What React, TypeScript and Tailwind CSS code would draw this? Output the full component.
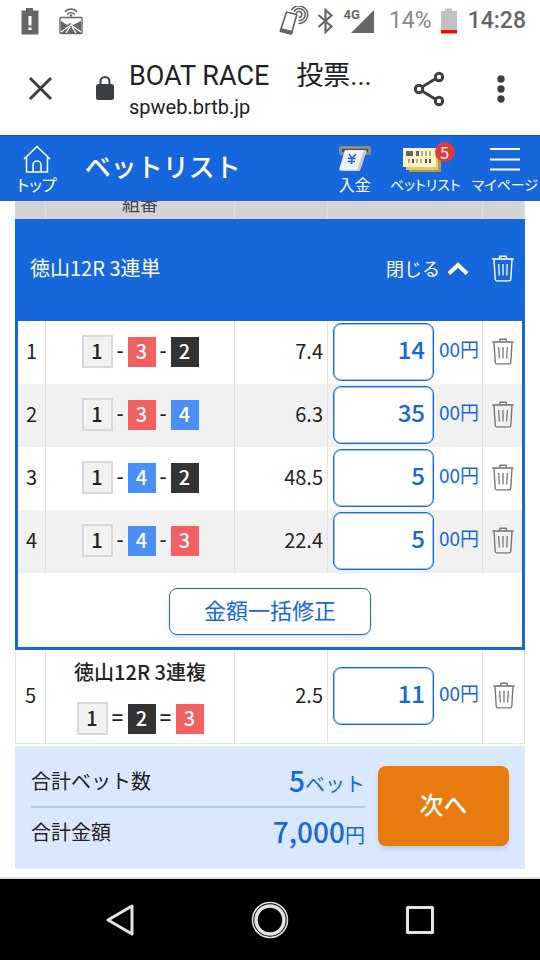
import React from "react";

type Boat = 1 | 2 | 3 | 4;

interface Bet {
  no: number;
  boats: Boat[];
  odds: string;
  amount: string;
  title?: string;
}

const groupBets: Bet[] = [
  { no: 1, boats: [1, 3, 2], odds: "7.4", amount: "14" },
  { no: 2, boats: [1, 3, 4], odds: "6.3", amount: "35" },
  { no: 3, boats: [1, 4, 2], odds: "48.5", amount: "5" },
  { no: 4, boats: [1, 4, 3], odds: "22.4", amount: "5" },
];

const singleBet: Bet = { no: 5, boats: [1, 2, 3], odds: "2.5", amount: "11", title: "徳山12R 3連複" };

const boatStyle: Record<Boat, string> = {
  1: "h-[33px] w-[31px] border-2 border-[#d8d8d8] bg-[#f1f1f1] text-[#222]",
  2: "h-[30px] w-7 bg-[#333] text-white",
  3: "h-[30px] w-7 bg-[#f16062] text-white",
  4: "h-[30px] w-7 bg-[#4a8ff5] text-white",
};

function TrashIcon({ className }: { className: string }) {
  return (
    <svg className={className} width="22" height="27" viewBox="0 0 22 27" fill="none" stroke="currentColor" aria-hidden="true">
      <path d="M0.3 4H21.7" strokeWidth="1.6" />
      <path d="M7.5 3.6L8 1.2H14L14.5 3.6" strokeWidth="1.5" />
      <path d="M2 4.4L3.2 24.2C3.3 25.3 3.9 25.9 5 25.9H17C18.1 25.9 18.7 25.3 18.8 24.2L20 4.4" strokeWidth="1.4" />
      <path d="M6.7 9L7.3 20.5M11 9V20.5M15.3 9L14.7 20.5" strokeWidth="1.3" />
    </svg>
  );
}

function StatusBar() {
  return (
    <div className="flex h-[42px] items-center justify-between pr-3.5 pl-[21px] text-[#666]">
      <div className="flex items-center gap-5">
        <svg width="18" height="28" viewBox="0 0 18 28" aria-hidden="true">
          <path d="M5 1H12V3.500H17.500V27.500H0.500V3.500H5Z" fill="currentColor" />
          <path d="M7.500 9H10.500V18.500H7.500ZM7.500 20.500H10.500V23H7.500Z" fill="white" />
        </svg>
        <svg width="24" height="28" viewBox="0 0 24 28" fill="none" stroke="currentColor" aria-hidden="true">
          <path d="M6 5C9 1 15 1 18 5M8 7.500C10 5 14 5 16 7.500" strokeWidth="1.300" />
          <circle cx="12" cy="8.500" r="1.200" fill="currentColor" stroke="none" />
          <rect x="1" y="10.500" width="22" height="16" rx="1" strokeWidth="1.400" />
          <path d="M2 14L8 18L11 16L14 18L22 14V26H2Z" fill="currentColor" stroke="none" />
          <path d="M12 17V18.500M12 18L2 25M12 18L22 25M11 20L7 26M13 20L17 26" stroke="white" strokeWidth="1.300" />
        </svg>
      </div>
      <div className="flex items-center">
        <svg width="31" height="30" viewBox="0 0 31 30" fill="none" stroke="currentColor" aria-hidden="true">
          <path d="M8.500 6L18.800 8.500L13.500 27.500L2.500 24.500Z" strokeWidth="1.700" strokeLinejoin="round" />
          <path d="M3 22.500L14.500 25.500L13.500 28.500L2 25.500Z" fill="currentColor" />
          <path d="M13.500 4A8.800 8.800 0 1 1 20.500 17.500M16 5.500A6 6 0 1 1 20.500 14.500M18 7.500A3 3 0 1 1 20.500 11.500" strokeWidth="1.600" />
        </svg>
        <svg className="ml-2" width="17" height="26" viewBox="0 0 17 26" fill="none" stroke="currentColor" aria-hidden="true">
          <path d="M1.500 7L14.500 18.500L8.500 24V2L14.500 7.500L1.500 19" strokeWidth="2.200" />
        </svg>
        <span className="ml-2.5 flex">
          <span className="text-[13px] leading-[14px] font-bold">4G</span>
          <svg className="-ml-2.5" width="24" height="26" viewBox="0 0 24 26" aria-hidden="true">
            <path d="M24 2V25H1Z" fill="currentColor" />
          </svg>
        </span>
        <span className="ml-[15px] text-[23px] text-[#888]">14%</span>
        <svg className="ml-2" width="18" height="26" viewBox="0 0 18 26" aria-hidden="true">
          <path d="M5 0.500H12V3H17V23H1V3H5Z" fill="#c1c1c1" />
          <path d="M1 22H17V25.500H1Z" fill="#f60606" />
        </svg>
        <span className="ml-2.5 text-[23px] font-medium">14:28</span>
      </div>
    </div>
  );
}

function BrowserBar() {
  return (
    <div className="flex h-[93px] items-center pr-[35px] pl-7 text-[#3c4043]">
      <button type="button" aria-label="Close">
        <svg width="25" height="25" viewBox="0 0 25 25" stroke="currentColor" strokeWidth="3" aria-hidden="true">
          <path d="M2 2L23 23M23 2L2 23" />
        </svg>
      </button>
      <svg className="ml-[42px] shrink-0" width="20" height="26" viewBox="0 0 20 26" aria-hidden="true">
        <rect x="1" y="8" width="18" height="16" rx="2.500" fill="currentColor" />
        <path d="M5.500 9V5.500A4.500 4.500 0 0 1 14.500 5.500V9" fill="none" stroke="currentColor" strokeWidth="2" />
      </svg>
      <div className="ml-3.5 min-w-0 flex-1 pt-0.5 text-[#202124]">
        <div className="text-[27px] leading-[34px] whitespace-nowrap">BOAT RACE　投票...</div>
        <div className="text-xl leading-[28px]">spweb.brtb.jp</div>
      </div>
      <button type="button" aria-label="Share" className="shrink-0">
        <svg width="32" height="36" viewBox="0 0 32 36" fill="none" stroke="currentColor" strokeWidth="3" aria-hidden="true">
          <path d="M9 16L23 7.500M9 20L23 28.500" />
          <circle cx="6" cy="18" r="3.700" />
          <circle cx="26" cy="6" r="3.700" />
          <circle cx="26" cy="30" r="3.700" />
        </svg>
      </button>
      <button type="button" aria-label="Menu" className="ml-[52px] shrink-0">
        <svg width="8" height="28" viewBox="0 0 8 28" fill="currentColor" aria-hidden="true">
          <circle cx="4" cy="4" r="3.700" />
          <circle cx="4" cy="14" r="3.700" />
          <circle cx="4" cy="24" r="3.700" />
        </svg>
      </button>
    </div>
  );
}

const navItem = "flex flex-col items-center gap-0.5 leading-[18px] whitespace-nowrap [font-feature-settings:'palt']";

function SiteHeader() {
  return (
    <header className="flex h-[66px] items-center border-t border-[#1455b4] bg-[#1767dc] text-white">
      <a href="#top" className={navItem + " ml-[17px] text-base"}>
        <svg width="28" height="29" viewBox="0 0 28 29" fill="none" stroke="currentColor" strokeWidth="1.500" aria-hidden="true">
          <path d="M1 15L14 2.500L27 15M3.500 13V28H24.500V13M10 27.500V21A4 4 0 0 1 18 21V27.500" />
        </svg>
        トップ
      </a>
      <h1 className="ml-7 flex-1 pb-1.5 text-[26px] font-medium whitespace-nowrap">ベットリスト</h1>
      <a href="#deposit" className={navItem + " text-base"}>
        <svg width="34" height="29" viewBox="0 0 34 29" aria-hidden="true">
          <rect x="1" y="2" width="32" height="9" rx="2" fill="#8b8b8b" />
          <rect x="4" y="5" width="26" height="3" fill="#4a4a4a" />
          <path d="M7 6H29L22 27H2Z" fill="#c9c9c9" />
          <path d="M7 6H26L19 26H1Z" fill="#f1f1f1" />
          <path d="M11 10L14 14.500L18 10M14 14.500L13.500 20M10 14.500H17.500M9.500 17.500H17" fill="none" stroke="#1767dc" strokeWidth="1.600" />
        </svg>
        入金
      </a>
      <a href="#bets" className={navItem + " relative ml-[18px] text-sm leading-[18px]"}>
        <svg width="44" height="29" viewBox="0 0 44 29" aria-hidden="true">
          <path d="M6 9H38V28H6Z" fill="#b49a43" />
          <path d="M3 7H35V26H3Z" fill="#ddc873" />
          <path d="M0 4H33V23H0Z" fill="#fff4c5" />
          <path d="M3 7H10V12H3ZM13 7H16V12H13Z" fill="#666" />
          <path d="M18 7H20V12H18ZM22 7H24V12H22ZM26 7H28V12H26ZM5 15H7V19H5ZM13 15H15V19H13ZM17 15H19V19H17Z" fill="#b9ad83" />
          <path d="M9 15H11V19H9ZM22 15H24V19H22ZM26 15H28V19H26Z" fill="#555" />
        </svg>
        ベットリスト
        <span className="absolute -top-0.5 right-1.5 flex size-5 items-center justify-center rounded-full bg-[#e5383b] text-base leading-5">5</span>
      </a>
      <button type="button" className={navItem + " mr-0.5 ml-[11px] text-sm leading-[18px]"}>
        <svg width="32" height="29" viewBox="0 0 32 29" stroke="currentColor" strokeWidth="2" aria-hidden="true">
          <path d="M1 5H31M1 15.500H31M1 25.500H31" />
        </svg>
        マイページ
      </button>
    </header>
  );
}

function Boats({ boats, mark }: { boats: Boat[]; mark: string }) {
  return (
    <div className="flex items-center justify-center">
      {boats.map((b, i) => (
        <React.Fragment key={b}>
          {i > 0 && <span className={"pb-1 text-center leading-6 font-medium " + (mark === "=" ? "w-5" : "w-[15px]")}>{mark}</span>}
          <span className={"flex items-center justify-center pb-0.5 text-xl leading-none font-medium " + boatStyle[b]}>{b}</span>
        </React.Fragment>
      ))}
    </div>
  );
}

const line = "border-r border-[#e2e2e2]";

function BetCells({ bet, grouped }: { bet: Bet; grouped: boolean }) {
  return (
    <>
      <td className={line + " pb-1 text-center " + (grouped ? "border-l-[3px] border-l-[#1767dc]" : "border-b border-l")}>{bet.no}</td>
      <td className={line + (grouped ? " pb-0.5" : " border-b")}>
        {bet.title && <div className="pb-4 text-center leading-7 font-medium">{bet.title}</div>}
        <Boats boats={bet.boats} mark={grouped ? "-" : "="} />
      </td>
      <td className={line + " pr-1 pb-1 text-right" + (grouped ? "" : " border-b")}>{bet.odds}</td>
      <td className={line + " pb-0.5" + (grouped ? "" : " border-b")}>
        <label className="flex items-center gap-[5px] pl-[5px] text-[#1767dc]">
          <input
            type="text"
            defaultValue={bet.amount}
            aria-label={"金額 " + bet.no}
            className="h-[58px] w-[101px] rounded-lg border border-[#1767dc] bg-white pr-2 pb-1.5 text-right text-2xl font-medium ring-1 ring-[#1767dc]/40 ring-inset"
          />
          <span className="pb-1 text-[19px] whitespace-nowrap">00円</span>
        </label>
      </td>
      <td className={"pb-0.5 " + (grouped ? "border-r-[3px] border-[#1767dc]" : line + " border-b")}>
        <button type="button" aria-label="削除" className="mx-auto block">
          <TrashIcon className="text-[#777]" />
        </button>
      </td>
    </>
  );
}

function BetTable() {
  return (
    <table className="w-full table-fixed border-separate border-spacing-0 text-xl">
      <colgroup>
        <col className="w-[31px]" />
        <col />
        <col className="w-[93px]" />
        <col className="w-[155px]" />
        <col className="w-[42px]" />
      </colgroup>
      <thead className="bg-[#d4d4d4]">
        <tr>
          <th className={line} />
          <th className={line + " p-0"}>
            <div className="flex h-[18px] items-end justify-center overflow-hidden pb-1.5 text-lg leading-5 font-normal text-[#444]">組番</div>
          </th>
          <th className={line} />
          <th className={line} />
          <th className={line} />
        </tr>
      </thead>
      <tbody>
        <tr className="bg-[#1767dc] text-white">
          <td colSpan={5} className="h-[102px] p-0">
            <div className="flex items-center pr-[11px] pb-1 pl-[15px]">
              <span className="flex-1">徳山12R 3連単</span>
              <button type="button" className="flex items-center gap-2 text-lg">
                閉じる
                <svg width="20" height="13" viewBox="0 0 20 13" fill="none" stroke="currentColor" strokeWidth="4" aria-hidden="true">
                  <path d="M1 11.500L10 3L19 11.500" />
                </svg>
              </button>
              <button type="button" aria-label="すべて削除" className="ml-6">
                <TrashIcon className="text-white" />
              </button>
            </div>
          </td>
        </tr>
        {groupBets.map((bet) => (
          <tr key={bet.no} className="h-[63px] even:bg-white odd:bg-[#f1f1f1]">
            <BetCells bet={bet} grouped />
          </tr>
        ))}
        <tr>
          <td colSpan={5} className="border-x-[3px] border-b-[3px] border-[#1767dc] pt-[15px] pb-3 text-center">
            <button
              type="button"
              className="h-[47px] w-[202px] rounded-lg border border-[#1767dc] bg-white pb-1 align-top text-[22px] text-[#1767dc] shadow-md"
            >
              金額一括修正
            </button>
          </td>
        </tr>
        <tr className="h-[94px]">
          <BetCells bet={singleBet} grouped={false} />
        </tr>
      </tbody>
    </table>
  );
}

function Summary() {
  return (
    <section className="mt-0.5 flex items-center gap-[13px] bg-[#d9e8ff] px-4 pt-2.5 pb-3.5 text-xl">
      <dl className="flex-1">
        <div className="flex h-[52px] items-center justify-between border-b-2 border-[#adcbf8]">
          <dt>合計ベット数</dt>
          <dd className="text-[#1767dc]">
            <span className="text-[28px] font-medium">5</span>ベット
          </dd>
        </div>
        <div className="flex h-[47px] items-center justify-between">
          <dt>合計金額</dt>
          <dd className="text-[#1767dc]">
            <span className="text-[28px] font-medium">7,000</span>円
          </dd>
        </div>
      </dl>
      <button type="button" className="h-20 w-[131px] rounded-lg bg-[#e87b0e] pb-1 text-2xl font-medium text-white shadow-md">
        次へ
      </button>
    </section>
  );
}

function SystemNav() {
  return (
    <nav className="flex h-[81px] items-center justify-center gap-[110px] bg-black text-[#e4e4e4]">
      <button type="button" aria-label="Back">
        <svg width="40" height="40" viewBox="0 0 40 40" fill="none" stroke="currentColor" strokeWidth="3" strokeLinejoin="round" aria-hidden="true">
          <path d="M32 6V34L8 20Z" />
        </svg>
      </button>
      <button type="button" aria-label="Home">
        <svg width="40" height="40" viewBox="0 0 40 40" fill="none" stroke="currentColor" aria-hidden="true">
          <circle cx="20" cy="20" r="17.500" strokeWidth="1.500" />
          <circle cx="20" cy="20" r="14" strokeWidth="3.500" />
        </svg>
      </button>
      <button type="button" aria-label="Recent apps">
        <svg width="40" height="40" viewBox="0 0 40 40" fill="none" stroke="currentColor" strokeWidth="3" strokeLinejoin="round" aria-hidden="true">
          <rect x="7.500" y="7.500" width="25" height="25" />
        </svg>
      </button>
    </nav>
  );
}

export default function App() {
  return (
    <div className="flex min-h-screen flex-col bg-white font-['Noto_Sans_CJK_JP',sans-serif] text-[#222]">
      <div className="font-[Roboto,'Noto_Sans_CJK_JP',sans-serif]">
        <StatusBar />
        <BrowserBar />
      </div>
      <SiteHeader />
      <main className="flex-1 px-[15px] pb-[7px]">
        <BetTable />
        <Summary />
      </main>
      <div className="h-[3px] bg-linear-to-b from-white to-[#ccc]" />
      <SystemNav />
    </div>
  );
}
